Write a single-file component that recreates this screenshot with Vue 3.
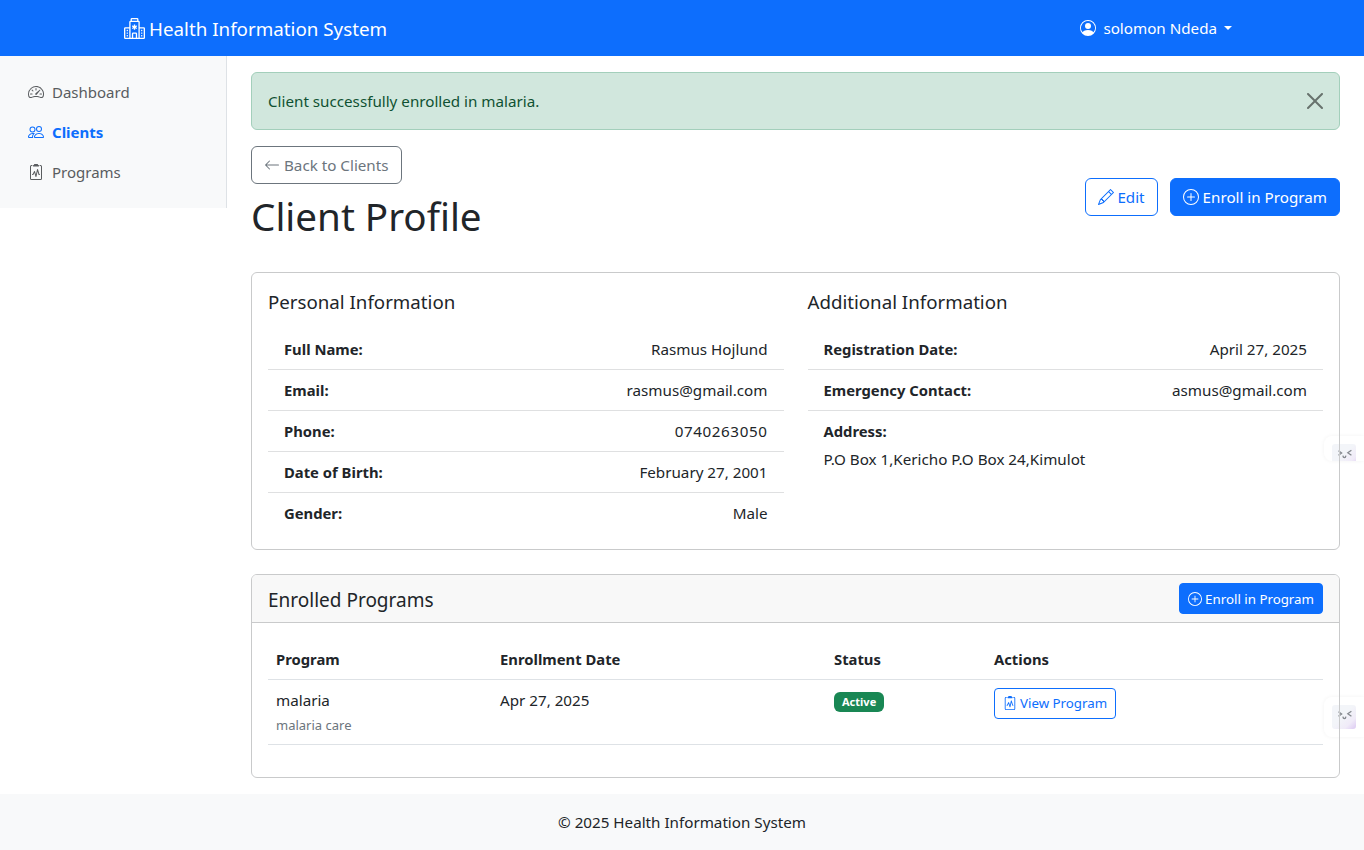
<script setup>
const personal = [
  { label: 'Full Name:', value: 'Rasmus Hojlund' },
  { label: 'Email:', value: 'rasmus@gmail.com' },
  { label: 'Phone:', value: '0740263050', digits: true },
  { label: 'Date of Birth:', value: 'February 27, 2001' },
  { label: 'Gender:', value: 'Male' }
]

const additional = [
  { label: 'Registration Date:', value: 'April 27, 2025' },
  { label: 'Emergency Contact:', value: 'asmus@gmail.com' }
]
</script>

<template>
  <div class="page">
    <div class="float-tab tab-one">
      <span class="tab-face">
        <svg viewBox="0 0 24 24" fill="none" stroke="#85898f" stroke-width="1.3">
          <path d="M6.5 6.8 9.6 9 6.5 11.2M19.4 6.3 15.8 8.8 19.4 11.2M10.9 11.6c.3 2.6 2.7 2.6 3 0"/>
        </svg>
      </span>
    </div>
    <div class="float-tab tab-two">
      <span class="tab-face">
        <svg viewBox="0 0 24 24" fill="none" stroke="#85898f" stroke-width="1.3">
          <path d="M6.5 6.8 9.6 9 6.5 11.2M19.4 6.3 15.8 8.8 19.4 11.2M10.9 11.6c.3 2.6 2.7 2.6 3 0"/>
        </svg>
      </span>
    </div>

    <header class="navbar">
      <a class="brand">
        <svg class="brand-icon" viewBox="0 0 16 16" fill="currentColor">
          <path d="M8.5 5.034v1.1l.953-.55.5.867L9 7l.953.55-.5.866-.953-.55v1.1h-1v-1.1l-.953.55-.5-.866L7 7l-.953-.55.5-.866.953.55v-1.1zM13.25 9a.25.25 0 0 0-.25.25v.5c0 .138.112.25.25.25h.5a.25.25 0 0 0 .25-.25v-.5a.25.25 0 0 0-.25-.25zM13 11.25a.25.25 0 0 1 .25-.25h.5a.25.25 0 0 1 .25.25v.5a.25.25 0 0 1-.25.25h-.5a.25.25 0 0 1-.25-.25zm.25 1.75a.25.25 0 0 0-.25.25v.5c0 .138.112.25.25.25h.5a.25.25 0 0 0 .25-.25v-.5a.25.25 0 0 0-.25-.25zm-11-4a.25.25 0 0 0-.25.25v.5c0 .138.112.25.25.25h.5A.25.25 0 0 0 3 9.75v-.5A.25.25 0 0 0 2.75 9zm0 2a.25.25 0 0 0-.25.25v.5c0 .138.112.25.25.25h.5a.25.25 0 0 0 .25-.25v-.5a.25.25 0 0 0-.25-.25zM2 13.25a.25.25 0 0 1 .25-.25h.5a.25.25 0 0 1 .25.25v.5a.25.25 0 0 1-.25.25h-.5a.25.25 0 0 1-.25-.25z"/>
          <path d="M5 1a1 1 0 0 1 1-1h4a1 1 0 0 1 1 1v1a1 1 0 0 1 1 1v4h3a1 1 0 0 1 1 1v7a1 1 0 0 1-1 1H1a1 1 0 0 1-1-1V8a1 1 0 0 1 1-1h3V3a1 1 0 0 1 1-1zm2 14h2v-3H7zm3 0h1V3H5v12h1v-3a1 1 0 0 1 1-1h2a1 1 0 0 1 1 1zm0-14H6v1h4zm2 7v7h3V8zm-8 7V8H1v7z"/>
        </svg>
        <span class="brand-text">Health Information System</span>
      </a>
      <a class="user">
        <svg class="icon" viewBox="0 0 16 16" fill="currentColor">
          <path d="M11 6a3 3 0 1 1-6 0 3 3 0 0 1 6 0"/>
          <path fill-rule="evenodd" d="M0 8a8 8 0 1 1 16 0A8 8 0 0 1 0 8m8-7a7 7 0 0 0-5.468 11.37C3.242 11.226 4.805 10 8 10s4.757 1.225 5.468 2.37A7 7 0 0 0 8 1"/>
        </svg>
        <span>solomon Ndeda</span>
        <i class="caret"></i>
      </a>
    </header>

    <div class="body-row">
      <aside class="sidebar">
        <a class="side-link">
          <svg class="icon" viewBox="0 0 16 16" fill="currentColor">
            <path d="M8 4a.5.5 0 0 1 .5.5V6a.5.5 0 0 1-1 0V4.5A.5.5 0 0 1 8 4M3.732 5.732a.5.5 0 0 1 .707 0l.915.914a.5.5 0 1 1-.708.708l-.914-.915a.5.5 0 0 1 0-.707M2 10a.5.5 0 0 1 .5-.5h1.586a.5.5 0 0 1 0 1H2.5A.5.5 0 0 1 2 10m9.5 0a.5.5 0 0 1 .5-.5h1.5a.5.5 0 0 1 0 1H12a.5.5 0 0 1-.5-.5m.754-4.246a.39.39 0 0 0-.527-.02L7.547 9.31a.91.91 0 1 0 1.302 1.258l3.434-4.297a.39.39 0 0 0-.029-.518z"/>
            <path fill-rule="evenodd" d="M0 10a8 8 0 1 1 15.547 2.661c-.442 1.253-1.845 1.602-2.932 1.25C11.309 13.488 9.475 13 8 13c-1.474 0-3.31.488-4.615.911-1.087.352-2.49.003-2.932-1.25A8 8 0 0 1 0 10m8-7a7 7 0 0 0-6.603 9.329c.203.575.923.876 1.68.63C4.397 12.533 6.358 12 8 12s3.604.532 4.923.96c.757.245 1.477-.056 1.68-.631A7 7 0 0 0 8 3"/>
          </svg>
          <span>Dashboard</span>
        </a>
        <a class="side-link active">
          <svg class="icon" viewBox="0 0 16 16" fill="currentColor">
            <path d="M15 14s1 0 1-1-1-4-5-4-5 3-5 4 1 1 1 1zm-7.978-1L7 12.996c.001-.264.167-1.03.76-1.72C8.312 10.629 9.282 10 11 10c1.717 0 2.687.63 3.24 1.276.593.69.758 1.457.76 1.72l-.008.002-.014.002zM11 7a2 2 0 1 0 0-4 2 2 0 0 0 0 4m3-2a3 3 0 1 1-6 0 3 3 0 0 1 6 0M6.936 9.28a6 6 0 0 0-1.23-.247A7 7 0 0 0 5 9c-4 0-5 3-5 4q0 1 1 1h4.216A2.24 2.24 0 0 1 5 13c0-1.01.377-2.042 1.09-2.904.243-.294.526-.569.846-.816M4.92 10A5.5 5.5 0 0 0 4 13H1c0-.26.164-1.03.76-1.724.545-.636 1.492-1.256 3.16-1.275ZM1.5 5.5a3 3 0 1 1 6 0 3 3 0 0 1-6 0m3-2a2 2 0 1 0 0 4 2 2 0 0 0 0-4"/>
          </svg>
          <span>Clients</span>
        </a>
        <a class="side-link">
          <svg class="icon" viewBox="0 0 16 16" fill="currentColor">
            <path d="M9.5 0a.5.5 0 0 1 .5.5.5.5 0 0 0 .5.5.5.5 0 0 1 .5.5V2a.5.5 0 0 1-.5.5h-5A.5.5 0 0 1 5 2v-.5a.5.5 0 0 1 .5-.5.5.5 0 0 0 .5-.5.5.5 0 0 1 .5-.5z"/>
            <path d="M3 2.5a.5.5 0 0 1 .5-.5H4a.5.5 0 0 0 0-1h-.5A1.5 1.5 0 0 0 2 2.5v12A1.5 1.5 0 0 0 3.5 16h9a1.5 1.5 0 0 0 1.5-1.5v-12A1.5 1.5 0 0 0 12.5 1H12a.5.5 0 0 0 0 1h.5a.5.5 0 0 1 .5.5v12a.5.5 0 0 1-.5.5h-9a.5.5 0 0 1-.5-.5z"/>
            <path d="M9.979 5.356a.5.5 0 0 0-.968.04L7.92 10.49l-.94-3.135a.5.5 0 0 0-.926-.08L4.69 10H4.5a.5.5 0 0 0 0 1H5a.5.5 0 0 0 .447-.276l.936-1.873 1.138 3.793a.5.5 0 0 0 .968-.04L9.58 7.51l.94 3.135A.5.5 0 0 0 11 11h.5a.5.5 0 0 0 0-1h-.128z"/>
          </svg>
          <span>Programs</span>
        </a>
      </aside>

      <main class="main">
        <div class="alert">
          <span>Client successfully enrolled in malaria.</span>
          <svg class="close" viewBox="0 0 16 16" fill="#000">
            <path d="M.293.293a1 1 0 0 1 1.414 0L8 6.586 14.293.293a1 1 0 1 1 1.414 1.414L9.414 8l6.293 6.293a1 1 0 0 1-1.414 1.414L8 9.414l-6.293 6.293a1 1 0 0 1-1.414-1.414L6.586 8 .293 1.707a1 1 0 0 1 0-1.414z"/>
          </svg>
        </div>

        <div class="head-row">
          <div>
            <a class="btn btn-back">
              <svg class="icon" viewBox="0 0 16 16" fill="currentColor">
                <path fill-rule="evenodd" d="M15 8a.5.5 0 0 0-.5-.5H2.707l3.147-3.146a.5.5 0 1 0-.708-.708l-4 4a.5.5 0 0 0 0 .708l4 4a.5.5 0 0 0 .708-.708L2.707 8.5H14.5A.5.5 0 0 0 15 8"/>
              </svg>
              <span>Back to Clients</span>
            </a>
            <h1>Client Profile</h1>
          </div>
          <div class="head-actions">
            <a class="btn btn-outline">
              <svg class="icon" viewBox="0 0 16 16" fill="currentColor">
                <path d="M12.146.146a.5.5 0 0 1 .708 0l3 3a.5.5 0 0 1 0 .708l-10 10a.5.5 0 0 1-.168.11l-5 2a.5.5 0 0 1-.65-.65l2-5a.5.5 0 0 1 .11-.168zM11.207 2.5 13.5 4.793 14.793 3.5 12.5 1.207zm1.586 3L10.5 3.207 4 9.707V10h.5a.5.5 0 0 1 .5.5v.5h.5a.5.5 0 0 1 .5.5v.5h.293zm-9.761 5.175-.106.106-1.528 3.821 3.821-1.528.106-.106A.5.5 0 0 1 5 12.5V12h-.5a.5.5 0 0 1-.5-.5V11h-.5a.5.5 0 0 1-.468-.325"/>
              </svg>
              <span>Edit</span>
            </a>
            <a class="btn btn-primary">
              <svg class="icon" viewBox="0 0 16 16" fill="currentColor">
                <path d="M8 15A7 7 0 1 1 8 1a7 7 0 0 1 0 14m0 1A8 8 0 1 0 8 0a8 8 0 0 0 0 16"/>
                <path d="M8 4a.5.5 0 0 1 .5.5v3h3a.5.5 0 0 1 0 1h-3v3a.5.5 0 0 1-1 0v-3h-3a.5.5 0 0 1 0-1h3v-3A.5.5 0 0 1 8 4"/>
              </svg>
              <span>Enroll in Program</span>
            </a>
          </div>
        </div>

        <section class="card info-card">
          <div class="info-col">
            <h5>Personal Information</h5>
            <div v-for="row in personal" :key="row.label" class="info-row">
              <strong>{{ row.label }}</strong>
              <span :class="{ digits: row.digits }">{{ row.value }}</span>
            </div>
          </div>
          <div class="info-col">
            <h5>Additional Information</h5>
            <div v-for="row in additional" :key="row.label" class="info-row">
              <strong>{{ row.label }}</strong>
              <span>{{ row.value }}</span>
            </div>
            <div class="info-row address">
              <strong>Address:</strong>
              <p>P.O Box 1,Kericho P.O Box 24,Kimulot</p>
            </div>
          </div>
        </section>

        <section class="card programs-card">
          <div class="card-header">
            <h5>Enrolled Programs</h5>
            <a class="btn btn-primary btn-sm">
              <svg class="icon" viewBox="0 0 16 16" fill="currentColor">
                <path d="M8 15A7 7 0 1 1 8 1a7 7 0 0 1 0 14m0 1A8 8 0 1 0 8 0a8 8 0 0 0 0 16"/>
                <path d="M8 4a.5.5 0 0 1 .5.5v3h3a.5.5 0 0 1 0 1h-3v3a.5.5 0 0 1-1 0v-3h-3a.5.5 0 0 1 0-1h3v-3A.5.5 0 0 1 8 4"/>
              </svg>
              <span>Enroll in Program</span>
            </a>
          </div>
          <div class="card-body">
            <table>
              <thead>
                <tr>
                  <th class="c1">Program</th>
                  <th class="c2">Enrollment Date</th>
                  <th class="c3">Status</th>
                  <th>Actions</th>
                </tr>
              </thead>
              <tbody>
                <tr>
                  <td>
                    <div>malaria</div>
                    <small>malaria care</small>
                  </td>
                  <td>Apr 27, 2025</td>
                  <td><span class="badge">Active</span></td>
                  <td>
                    <a class="btn btn-outline btn-sm">
                      <svg class="icon" viewBox="0 0 16 16" fill="currentColor">
                        <path d="M9.5 0a.5.5 0 0 1 .5.5.5.5 0 0 0 .5.5.5.5 0 0 1 .5.5V2a.5.5 0 0 1-.5.5h-5A.5.5 0 0 1 5 2v-.5a.5.5 0 0 1 .5-.5.5.5 0 0 0 .5-.5.5.5 0 0 1 .5-.5z"/>
                        <path d="M3 2.5a.5.5 0 0 1 .5-.5H4a.5.5 0 0 0 0-1h-.5A1.5 1.5 0 0 0 2 2.5v12A1.5 1.5 0 0 0 3.5 16h9a1.5 1.5 0 0 0 1.5-1.5v-12A1.5 1.5 0 0 0 12.5 1H12a.5.5 0 0 0 0 1h.5a.5.5 0 0 1 .5.5v12a.5.5 0 0 1-.5.5h-9a.5.5 0 0 1-.5-.5z"/>
                        <path d="M9.979 5.356a.5.5 0 0 0-.968.04L7.92 10.49l-.94-3.135a.5.5 0 0 0-.926-.08L4.69 10H4.5a.5.5 0 0 0 0 1H5a.5.5 0 0 0 .447-.276l.936-1.873 1.138 3.793a.5.5 0 0 0 .968-.04L9.58 7.51l.94 3.135A.5.5 0 0 0 11 11h.5a.5.5 0 0 0 0-1h-.128z"/>
                      </svg>
                      <span>View Program</span>
                    </a>
                  </td>
                </tr>
              </tbody>
            </table>
          </div>
        </section>
      </main>
    </div>

    <footer class="footer">© 2025 Health Information System</footer>
  </div>
</template>

<style scoped>
.page {
  position: relative;
  width: 1364px;
  height: 850px;
  overflow: hidden;
  font-family: "Noto Sans", "Liberation Sans", sans-serif;
  font-size: 15.2px;
  line-height: 24px;
  color: #212529;
  background: #fff;
}

.icon {
  width: 16px;
  height: 16px;
  flex: none;
}

.navbar {
  height: 56px;
  background: #0d6efd;
  color: #fff;
  display: flex;
  align-items: center;
  justify-content: space-between;
  padding: 0 132px 0 124px;
}

.brand {
  display: flex;
  align-items: center;
  gap: 4px;
  font-size: 18.8px;
}

.brand-text {
  margin-top: 2px;
}

.brand-icon {
  width: 21px;
  height: 21px;
}

.user {
  display: flex;
  align-items: center;
  gap: 7px;
}

.caret {
  width: 0;
  height: 0;
  border-top: 4.8px solid #fff;
  border-left: 4.8px solid transparent;
  border-right: 4.8px solid transparent;
}

.body-row {
  position: relative;
  display: flex;
  align-items: flex-start;
  height: 738px;
}

.sidebar {
  width: 227px;
  height: 152px;
  flex: none;
  box-sizing: border-box;
  padding: 16px 0 0 28px;
  background: #f8f9fa;
  border-right: 1px solid #dee2e6;
}

.side-link {
  display: flex;
  align-items: center;
  gap: 8px;
  height: 40px;
  font-size: 15px;
  color: #595c5f;
}

.side-link.active {
  color: #0d6efd;
  font-weight: 700;
}

.main {
  flex: 1;
  min-width: 0;
  padding: 16px 24px;
}

.alert {
  height: 58px;
  box-sizing: border-box;
  display: flex;
  align-items: center;
  justify-content: space-between;
  padding: 0 16px;
  margin-bottom: 16px;
  background: #d1e7dd;
  border: 1px solid #a3cfbb;
  border-radius: 6px;
  color: #0f5132;
}

.close {
  width: 16px;
  height: 16px;
  opacity: 0.5;
}

.head-row {
  display: flex;
  align-items: center;
  justify-content: space-between;
  margin-bottom: 24px;
}

.head-row h1 {
  margin: 8px 0;
  font-size: 38.6px;
  font-weight: 400;
  line-height: 48px;
}

.head-actions {
  display: flex;
  gap: 12px;
}

.btn {
  display: inline-flex;
  align-items: center;
  gap: 4px;
  box-sizing: border-box;
  height: 38px;
  padding: 0 12px;
  border: 1px solid transparent;
  border-radius: 6px;
}

.btn-back {
  color: #6c757d;
  border-color: #6c757d;
}

.btn-outline {
  color: #0d6efd;
  border-color: #0d6efd;
  gap: 3px;
}

.btn-primary {
  color: #fff;
  background: #0d6efd;
  border-color: #0d6efd;
}

.btn-sm {
  height: 31px;
  padding: 0 8px;
  gap: 3px;
  font-size: 13.3px;
  border-radius: 4px;
}

.btn-sm .icon {
  width: 14px;
  height: 14px;
}

.card {
  box-sizing: border-box;
  border: 1px solid #c9cacb;
  border-radius: 6px;
}

.info-card {
  display: grid;
  grid-template-columns: 1fr 1fr;
  column-gap: 24px;
  height: 278px;
  padding: 16px 16px 0;
  margin-bottom: 24px;
}

h5 {
  margin: 0;
  font-size: 18.7px;
  font-weight: 400;
  line-height: 26px;
}

.info-col h5 {
  margin-bottom: 14px;
}

.info-row {
  display: flex;
  justify-content: space-between;
  height: 41px;
  box-sizing: border-box;
  padding: 8px 16px;
  border-bottom: 1px solid #dfe0e1;
}

.info-row:last-child {
  border-bottom: 0;
}

.info-row strong {
  font-size: 14.8px;
  font-weight: 700;
}

.digits {
  letter-spacing: 0.6px;
}

.info-row.address {
  display: block;
  height: auto;
}

.info-row.address p {
  margin: 4px 0 0;
}

.programs-card {
  height: 204px;
}

.card-header {
  display: flex;
  align-items: center;
  justify-content: space-between;
  height: 48px;
  box-sizing: border-box;
  padding: 0 16px;
  background: #f8f8f8;
  border-bottom: 1px solid #c9cacb;
  border-radius: 5px 5px 0 0;
}

.card-header h5 {
  font-size: 19px;
  margin-top: 2px;
}

.card-body {
  padding: 16px;
}

table {
  width: 100%;
  border-collapse: collapse;
  table-layout: fixed;
}

th {
  text-align: left;
  font-size: 14.8px;
  font-weight: 700;
  height: 40px;
  padding: 0 8px;
  border-bottom: 1px solid #dee2e6;
  box-sizing: border-box;
}

th.c1 { width: 224px; }
th.c2 { width: 334px; }
th.c3 { width: 160px; }

td {
  vertical-align: top;
  padding: 8px;
  height: 65px;
  box-sizing: border-box;
  border-bottom: 1px solid #dee2e6;
}

td small {
  display: block;
  font-size: 13px;
  color: #6c757d;
  line-height: 20px;
  margin-top: 3px;
}

.badge {
  display: inline-block;
  padding: 0 8px;
  height: 20px;
  line-height: 20px;
  font-size: 11px;
  font-weight: 700;
  color: #fff;
  background: #198754;
  border-radius: 6px;
  vertical-align: top;
  margin-top: 4px;
}

.footer {
  position: absolute;
  left: 0;
  right: 0;
  bottom: 0;
  height: 56px;
  display: flex;
  align-items: center;
  justify-content: center;
  background: #f8f9fa;
}

.float-tab {
  position: absolute;
  right: 0;
  width: 40px;
  height: 40px;
  box-sizing: border-box;
  padding: 8px;
  border-radius: 8px 0 0 8px;
  background: #fff;
  box-shadow: 0 0 4px rgba(0, 0, 0, 0.05);
}

.tab-one {
  top: 436px;
  height: 25px;
  overflow: hidden;
}

.tab-two {
  top: 697px;
}

.tab-face {
  display: block;
  width: 24px;
  height: 24px;
  border-radius: 3px;
  background: linear-gradient(135deg, #f3f5f9 45%, #f0ebf8 75%, #dcc9f2);
}

.tab-face svg {
  display: block;
  width: 24px;
  height: 24px;
}
</style>
